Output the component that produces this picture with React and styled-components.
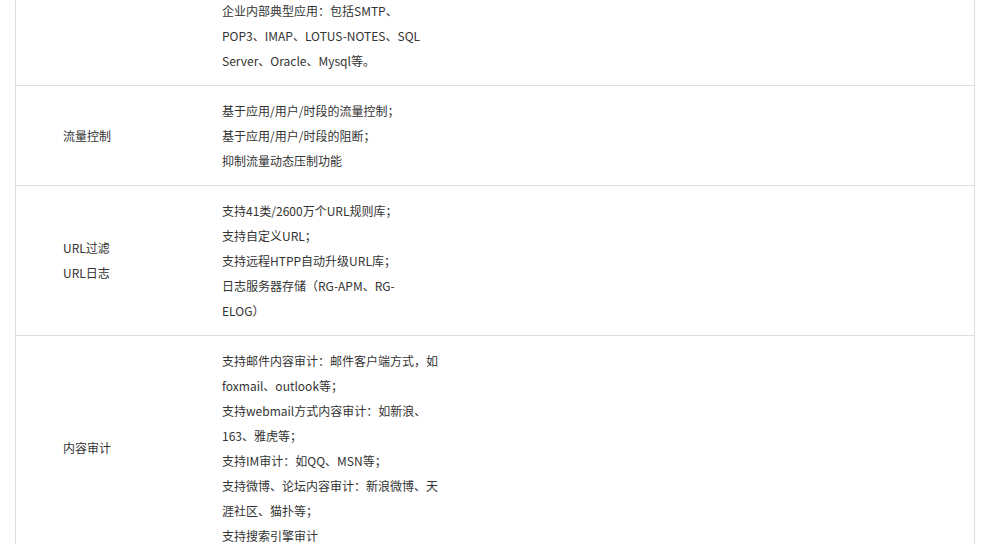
import React from 'react'
import styled, { createGlobalStyle } from 'styled-components'

const Global = createGlobalStyle`
  html, body {
    margin: 0;
    padding: 0;
    background: #fff;
    overflow: hidden;
  }
  body {
    font-family: "Noto Sans CJK SC", "Liberation Sans", sans-serif;
    font-size: 12px;
    color: #333;
  }
`

const Page = styled.div`
  width: 990px;
  height: 544px;
  overflow: hidden;
  padding-left: 15px;
  box-sizing: border-box;
`

const Table = styled.div`
  width: 960px;
  margin-top: -14px;
  border-left: 1px solid #ddd;
  border-right: 1px solid #ddd;
  box-sizing: border-box;
`

const Row = styled.div`
  display: grid;
  grid-template-columns: 206px 1fr;
  align-items: center;
  padding: 11.5px 0 13.5px;
  border-top: ${p => (p.$first ? 'none' : '1px solid #ddd')};
  margin-top: ${p => (p.$first ? '0' : '-1px')};
`

const Label = styled.div`
  padding-left: 47px;
  line-height: 25px;
`

const Lines = styled.div`
  line-height: 25px;
  white-space: nowrap;
`

const rows = [
  {
    label: [],
    lines: [
      '企业内部典型应用：包括SMTP、',
      'POP3、IMAP、LOTUS-NOTES、SQL',
      'Server、Oracle、Mysql等。',
    ],
  },
  {
    label: ['流量控制'],
    lines: [
      '基于应用/用户/时段的流量控制；',
      '基于应用/用户/时段的阻断；',
      '抑制流量动态压制功能',
    ],
  },
  {
    label: ['URL过滤', 'URL日志'],
    lines: [
      '支持41类/2600万个URL规则库；',
      '支持自定义URL；',
      '支持远程HTPP自动升级URL库；',
      '日志服务器存储（RG-APM、RG-',
      'ELOG）',
    ],
  },
  {
    label: ['内容审计'],
    lines: [
      '支持邮件内容审计：邮件客户端方式，如',
      'foxmail、outlook等；',
      '支持webmail方式内容审计：如新浪、',
      '163、雅虎等；',
      '支持IM审计：如QQ、MSN等；',
      '支持微博、论坛内容审计：新浪微博、天',
      '涯社区、猫扑等；',
      '支持搜索引擎审计',
    ],
  },
]

export default function App() {
  return (
    <Page>
      <Global />
      <Table>
        {rows.map((r, i) => (
          <Row key={i} $first={i === 0}>
            <Label>
              {r.label.map((t, j) => <div key={j}>{t}</div>)}
            </Label>
            <Lines>
              {r.lines.map((t, j) => <div key={j}>{t}</div>)}
            </Lines>
          </Row>
        ))}
      </Table>
    </Page>
  )
}
